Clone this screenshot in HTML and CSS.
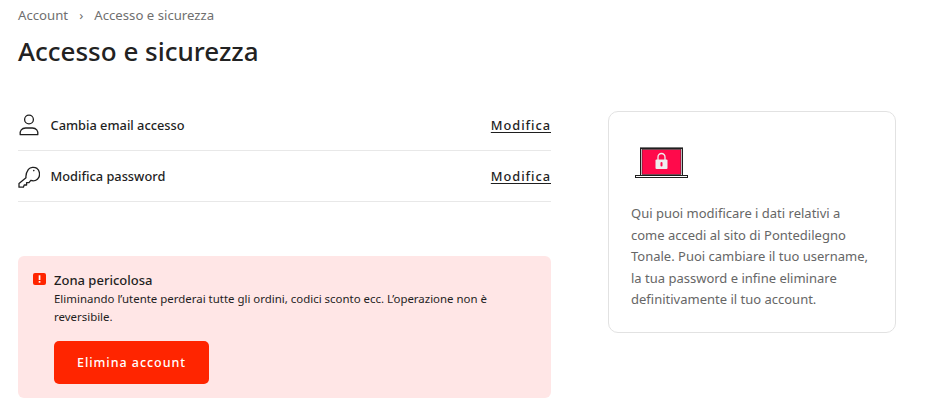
FILE: index.html
```html
<!DOCTYPE html>
<html lang="it">
<head>
  <meta charset="UTF-8">
  <title>Accesso e sicurezza</title>
  <link rel="stylesheet" href="styles.css">
</head>
<body>
  <div class="page">
    <main class="main">
      <nav class="breadcrumb">
        <span>Account</span>
        <span class="sep">›</span>
        <span>Accesso e sicurezza</span>
      </nav>
      <h1>Accesso e sicurezza</h1>

      <div class="rows">
        <div class="row">
          <svg class="row-icon" width="22" height="24" viewBox="0 0 22 24" fill="none" stroke="#1f1f1f" stroke-width="1.300">
            <circle cx="11" cy="6.500" r="4.400"/>
            <path d="M2.200 21.600c-.6-3.800 1.600-6.600 5.400-6.600h6.800c3.800 0 6 2.800 5.400 6.600z" stroke-linejoin="round"/>
          </svg>
          <span class="row-label">Cambia email accesso</span>
          <a class="row-link" href="#">Modifica</a>
        </div>
        <div class="row">
          <svg class="row-icon" width="22" height="24" viewBox="0 0 22 24" fill="none" stroke="#1f1f1f" stroke-width="1.300" stroke-linejoin="round">
            <path d="M8 13.800 1 19.400v3.800h4.400l.8-2.200h2.400v-2.400h2.400l1.800-2.200c3.200 1 6.600-.2 8-3 1.400-3 .8-7-1.800-9-2.600-1.800-6.600-1.400-8.600 1C8.600 8 7.600 11 8 13.800z"/>
            <circle cx="15.800" cy="6.600" r=".8" fill="#1f1f1f" stroke="none"/>
          </svg>
          <span class="row-label">Modifica password</span>
          <a class="row-link" href="#">Modifica</a>
        </div>
      </div>

      <section class="danger">
        <svg class="danger-icon" width="13" height="12" viewBox="0 0 13 12">
          <rect width="13" height="12" rx="2" fill="#ff2500"/>
          <rect x="5.700" y="2.300" width="1.700" height="4.700" fill="#fff"/>
          <rect x="5.700" y="8" width="1.700" height="1.700" fill="#fff"/>
        </svg>
        <div class="danger-body">
          <h2>Zona pericolosa</h2>
          <p>Eliminando l’utente perderai tutte gli ordini, codici sconto ecc. L’operazione non è reversibile.</p>
          <button class="btn-danger">Elimina account</button>
        </div>
      </section>
    </main>

    <aside class="card">
      <svg class="laptop" width="55" height="33" viewBox="0 0 55 33">
        <rect x="6" y="1" width="43" height="1.500" fill="#777"/>
        <rect x="6" y="2" width="43" height="28" fill="#fff"/>
        <rect x="6.500" y="2.500" width="42" height="27" fill="none" stroke="#1f1f1f"/>
        <rect x="8" y="3.500" width="39" height="25" fill="#ff0a4b" stroke="#1f1f1f" stroke-width=".6"/>
        <path d="M24 14v-3a3.500 3.500 0 0 1 7 0v3" fill="none" stroke="#eee" stroke-width="1.300"/>
        <rect x="21.500" y="13.500" width="12" height="9.500" rx="1" fill="#eee"/>
        <rect x="26.500" y="16" width="2" height="4.500" rx="1" fill="#ff0a4b"/>
        <rect x="1.500" y="29.500" width="52" height="2" fill="#fff" stroke="#1f1f1f"/>
      </svg>
      <p>Qui puoi modificare i dati relativi a come accedi al sito di Pontedilegno Tonale. Puoi cambiare il tuo username, la tua password e infine eliminare definitivamente il tuo account.</p>
    </aside>
  </div>
</body>
</html>
```

FILE: styles.css
```css
* {
  box-sizing: border-box;
}
body {
  margin: 0;
  font-family: "Noto Sans", sans-serif;
  color: #1f1f1f;
  background: #fff;
}
.page {
  display: flex;
  align-items: flex-start;
  padding: 0 42px 0 18px;
  gap: 57px;
}
.main {
  width: 533px;
  flex-shrink: 0;
}
.breadcrumb {
  display: flex;
  gap: 11px;
  padding-top: 7px;
  height: 25px;
  font-size: 13.200px;
  line-height: 17px;
  color: #6f6f6f;
}
h1 {
  margin: 0;
  height: 75px;
  font-size: 26px;
  line-height: 52px;
  font-weight: 500;
  color: #222;
}
.rows {
  display: flex;
  flex-direction: column;
}
.row {
  display: flex;
  align-items: center;
  height: 51px;
  border-bottom: 1px solid #e8e8e8;
}
.row-icon {
  flex-shrink: 0;
  margin-right: 10.500px;
}
.row-label {
  flex: 1;
  font-size: 12.800px;
  font-weight: 500;
}
.row-link {
  font-size: 12.800px;
  font-weight: 500;
  letter-spacing: .95px;
  color: #1f1f1f;
  text-decoration-thickness: 1px;
  text-underline-offset: 2px;
}
.danger {
  display: flex;
  align-items: flex-start;
  gap: 8px;
  margin-top: 54px;
  height: 142px;
  padding: 16px 15px;
  background: #ffe6e6;
  border-radius: 6px;
}
.danger-icon {
  flex-shrink: 0;
  margin-top: 1px;
}
.danger-body {
  flex: 1;
}
.danger h2 {
  margin: 0;
  font-size: 13px;
  line-height: 17px;
  font-weight: 500;
}
.danger p {
  margin: 1px 0 0;
  font-size: 11.450px;
  line-height: 18px;
}
.btn-danger {
  display: block;
  width: 155px;
  height: 43px;
  margin-top: 15px;
  border: none;
  border-radius: 5px;
  background: #ff2500;
  color: #fff;
  font-family: inherit;
  font-size: 12.500px;
  font-weight: 500;
  letter-spacing: .95px;
  cursor: pointer;
}
.card {
  width: 288px;
  height: 222px;
  margin-top: 111px;
  padding: 34px 22px 0;
  border: 1px solid #e2e2e2;
  border-radius: 10px;
}
.laptop {
  display: block;
  margin-left: 3px;
}
.card p {
  margin: 24px 0 0;
  font-size: 13px;
  line-height: 21.500px;
  color: #666;
}
```
